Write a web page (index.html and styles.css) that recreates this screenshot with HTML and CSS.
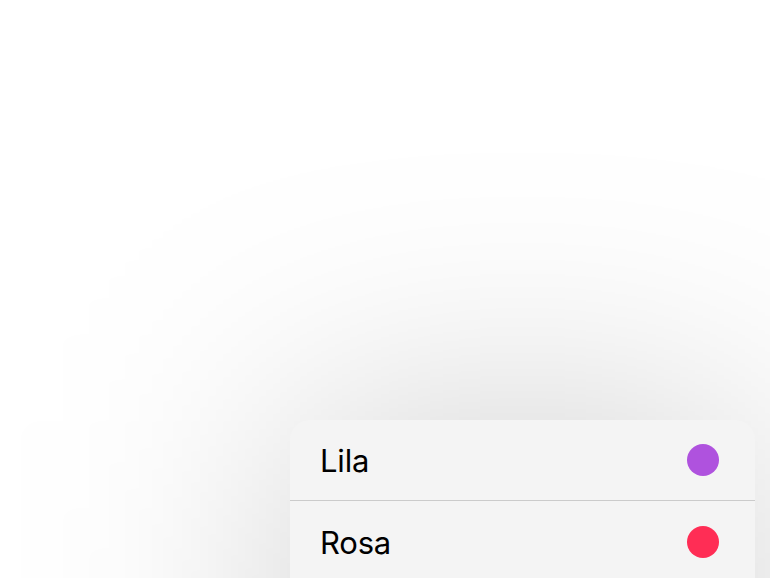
FILE: index.html
```html
<!DOCTYPE html>
<html lang="de">
<head>
<meta charset="utf-8">
<link rel="stylesheet" href="styles.css">
</head>
<body>
<div class="stage">
  <div class="menu">
    <div class="row">
      <span class="label">Lila</span>
      <span class="dot dot-purple"></span>
    </div>
    <div class="row">
      <span class="label">Rosa</span>
      <span class="dot dot-pink"></span>
    </div>
  </div>
</div>
</body>
</html>
```
FILE: styles.css
```css
html {
  margin: 0;
  padding: 0;
  background: #ffffff;
  overflow: hidden;
}
body {
  margin: 0;
  padding: 0;
  overflow: hidden;
}
.stage {
  width: 770px;
  height: 578px;
  box-sizing: border-box;
  padding: 420px 15px 0 290px;
  display: flex;
  flex-direction: column;
  overflow: hidden;
}
.menu {
  position: relative;
  background: #f4f4f4;
  border-radius: 20px;
  display: flex;
  flex-direction: column;
  flex-shrink: 0;
  min-height: 400px;
}
.menu::before {
  content: "";
  position: absolute;
  left: 0;
  right: 0;
  top: 0;
  bottom: 0;
  border-radius: 20px;
  background: rgba(0, 0, 0, 0.19);
  filter: blur(130px);
  z-index: -1;
}
.row {
  height: 80px;
  display: flex;
  align-items: center;
  justify-content: space-between;
  padding: 0 36px 0 30px;
  font-family: Inter, "Noto Sans", sans-serif;
}
.row + .row {
  border-top: 1px solid #cbcbcb;
  height: 82px;
}
.label {
  font-size: 31px;
  color: #000;
  letter-spacing: -0.2px;
}
.dot {
  width: 32px;
  height: 32px;
  border-radius: 50%;
}
.dot-purple { background: #af52de; }
.dot-pink { background: #ff2d55; }
```
